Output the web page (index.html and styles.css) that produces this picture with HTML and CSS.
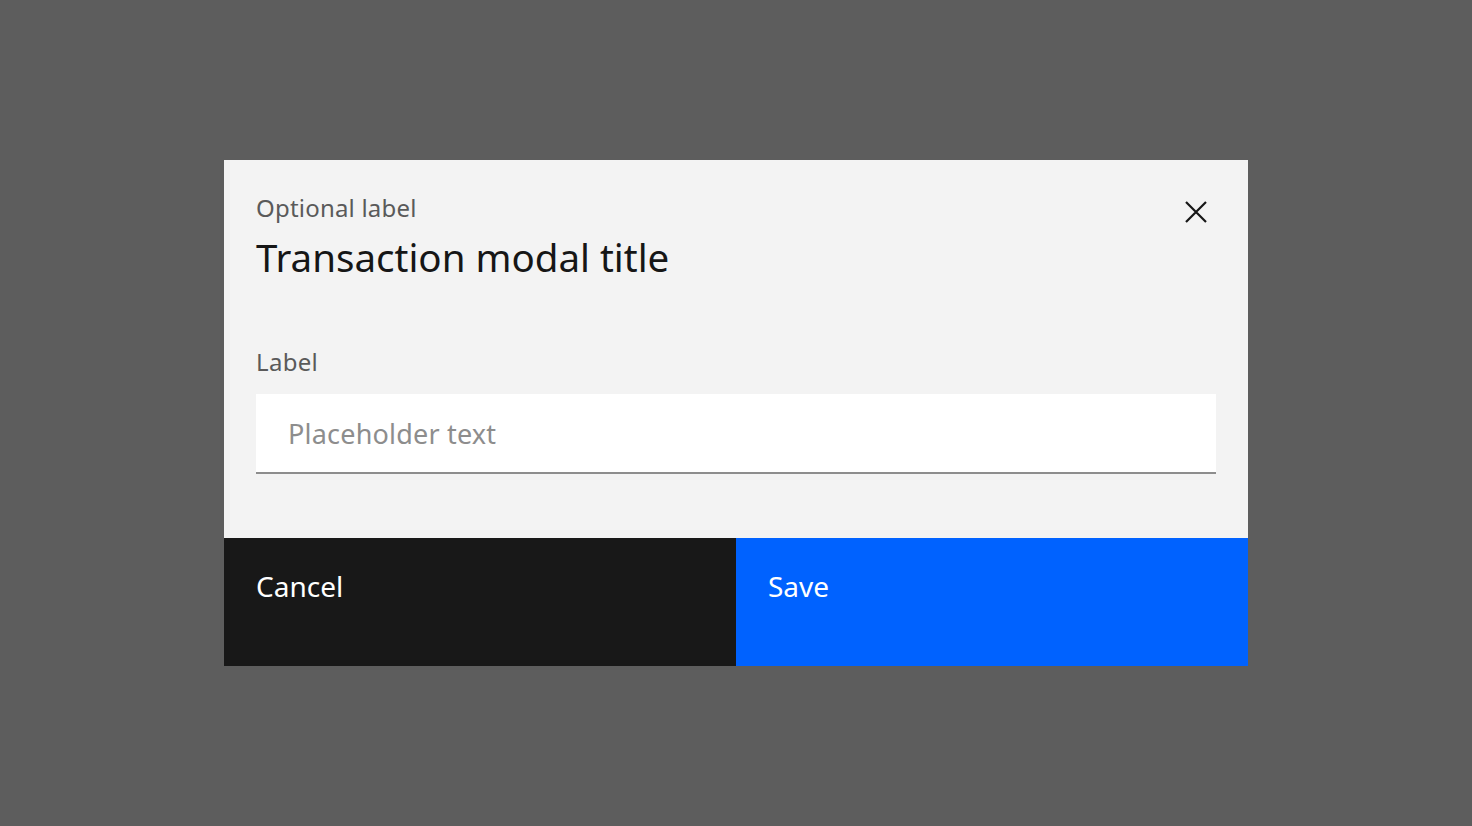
FILE: index.html
```html
<!DOCTYPE html>
<html lang="en">
<head>
<meta charset="utf-8">
<title>Transaction modal</title>
<link rel="stylesheet" href="styles.css">
</head>
<body>
<div class="overlay">
  <div class="modal" role="dialog" aria-labelledby="modal-title">
    <div class="modal-header">
      <div class="header-text">
        <p class="modal-label">Optional label</p>
        <h2 class="modal-title" id="modal-title">Transaction modal title</h2>
      </div>
      <button class="close-btn" type="button" aria-label="Close">
        <svg width="22" height="22" viewBox="0 0 22 22" aria-hidden="true">
          <path d="M1 1 L21 21 M21 1 L1 21" stroke="#161616" stroke-width="2.2" fill="none"/>
        </svg>
      </button>
    </div>
    <div class="modal-content">
      <label class="field-label" for="field">Label</label>
      <input class="text-input" id="field" type="text" placeholder="Placeholder text">
    </div>
    <div class="modal-footer">
      <button class="btn btn-secondary" type="button">Cancel</button>
      <button class="btn btn-primary" type="button">Save</button>
    </div>
  </div>
</div>
</body>
</html>
```

FILE: styles.css
```css
* { box-sizing: border-box; }
html, body { margin: 0; padding: 0; height: 100%; }
body {
  font-family: "Noto Sans", "Liberation Sans", Arial, sans-serif;
  background: #5d5d5d;
}
.overlay {
  width: 100%;
  height: 100%;
  display: flex;
  align-items: center;
  justify-content: center;
}
.modal {
  width: 1024px;
  height: 506px;
  background: #f3f3f3;
  display: flex;
  flex-direction: column;
}
.modal-header {
  display: flex;
  justify-content: space-between;
  align-items: flex-start;
  padding: 32px 20px 0 32px;
}
.modal-label {
  margin: 0;
  font-size: 24px;
  line-height: 32px;
  color: #5a5a5a;
  letter-spacing: 0.2px;
}
.modal-title {
  margin: 9px 0 0;
  font-size: 38.5px;
  line-height: 48px;
  font-weight: 400;
  color: #161616;
}
.close-btn {
  width: 64px;
  height: 64px;
  margin-top: -12px;
  border: 0;
  background: transparent;
  display: flex;
  align-items: center;
  justify-content: center;
  padding: 0;
}
.modal-content {
  flex: 1;
  padding: 65px 32px 0;
  display: flex;
  flex-direction: column;
}
.field-label {
  font-size: 24px;
  line-height: 32px;
  color: #5a5a5a;
  letter-spacing: 0.3px;
  margin-bottom: 16px;
}
.text-input {
  height: 80px;
  width: 100%;
  border: 0;
  border-bottom: 2px solid #8d8d8d;
  background: #ffffff;
  padding: 0 32px;
  font-family: inherit;
  font-size: 27px;
  color: #161616;
  outline: none;
}
.text-input::placeholder { color: #8d8d8d; letter-spacing: 0.2px; }
.modal-footer {
  display: flex;
  height: 128px;
}
.btn {
  flex: 1;
  border: 0;
  text-align: left;
  display: flex;
  align-items: flex-start;
  padding: 28px 32px;
  font-family: inherit;
  font-size: 28px;
  line-height: 40px;
  color: #ffffff;
}
.btn-secondary { background: #181818; }
.btn-primary { background: #0062ff; }
```
